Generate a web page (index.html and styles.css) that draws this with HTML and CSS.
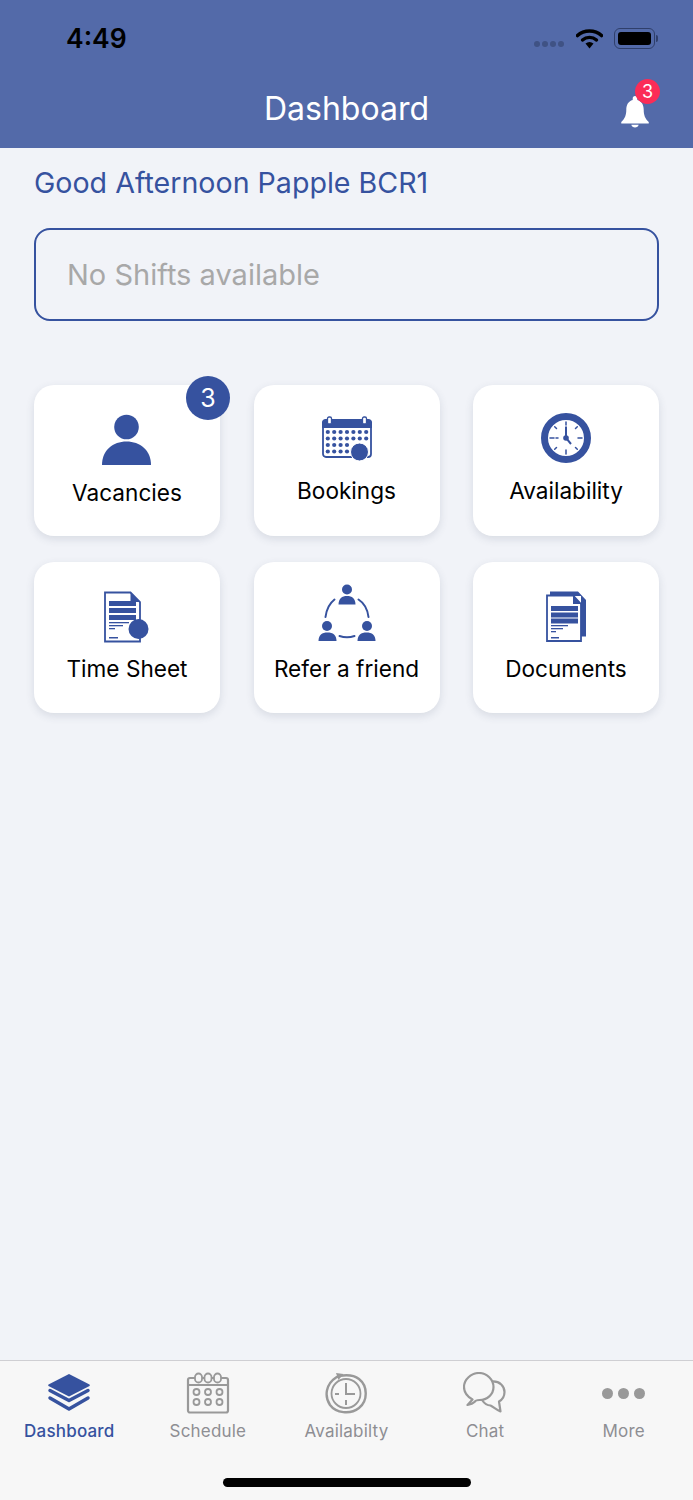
FILE: index.html
```html
<!DOCTYPE html>
<html lang="en">
<head>
    <meta charset="UTF-8">
    <meta name="viewport" content="width=device-width, initial-scale=1.0">
    <title>Dashboard</title>
    <link rel="stylesheet" href="styles.css">
</head>
<body>
<div class="app">

    <header class="top_bar">
        <div class="status_bar">
            <span class="status_time">4:49</span>
            <div class="status_icons">
                <div class="signal_dots"><i></i><i></i><i></i><i></i></div>
                <svg width="27" height="21" viewBox="0 0 27 21">
                    <path d="M1.5 7.5C8 1.5 19 1.5 25.5 7.5" fill="none" stroke="#000" stroke-width="3.6" stroke-linecap="round"/>
                    <path d="M6.5 12C10.5 8.5 16.5 8.5 20.5 12" fill="none" stroke="#000" stroke-width="3.4" stroke-linecap="round"/>
                    <path d="M9.5 15.5C12 13.5 15 13.5 17.5 15.5L13.5 20.5Z" fill="#000"/>
                </svg>
                <div class="battery"><div class="battery_fill"></div></div>
                <div class="battery_cap"></div>
            </div>
        </div>
        <div class="nav_bar">
            <h1 class="nav_title">Dashboard</h1>
            <div class="bell">
                <svg width="30" height="33" viewBox="0 0 32 36">
                    <path d="M16 1C17.600 1 18.500 2.200 18.500 3.800V5.500C23.500 7 25.500 11 25.500 16C25.500 22 27 25.500 31 29.500V31H1V29.500C5 25.500 6.500 22 6.500 16C6.500 11 8.500 7 13.500 5.500V3.800C13.500 2.200 14.400 1 16 1Z" fill="#fff"/>
                    <path d="M12 32.500H20C19.500 34.500 18 35.500 16 35.500C14 35.500 12.500 34.500 12 32.500Z" fill="#fff"/>
                </svg>
                <span class="bell_badge">3</span>
            </div>
        </div>
    </header>

    <main class="content">
        <h2 class="greeting">Good Afternoon Papple BCR1</h2>
        <div class="shift_box">No Shifts available</div>

        <div class="cards">
            <div class="card">
                <span class="card_badge">3</span>
                <svg class="icon_person" width="52" height="52" viewBox="0 0 52 52">
                    <circle cx="25.500" cy="13" r="12.300" fill="#36529f"/>
                    <path d="M1 51C1 36 12 27.500 25.500 27.500C39 27.500 50 36 50 51Z" fill="#36529f"/>
                </svg>
                <span class="card_label">Vacancies</span>
            </div>

            <div class="card card_high">
                <svg class="icon_calendar" width="52" height="46" viewBox="0 0 52 46">
                    <rect x="2" y="5" width="48" height="36" rx="3" fill="#fff" stroke="#36529f" stroke-width="1.800"/>
                    <path d="M1 12V6.500C1 4.500 2.500 3 4.500 3H47.500C49.500 3 51 4.500 51 6.500V12Z" fill="#36529f"/>
                    <rect x="6.500" y="1" width="4" height="7" rx="1.500" fill="#fff" stroke="#36529f" stroke-width="1.300"/>
                    <rect x="41.500" y="1" width="4" height="7" rx="1.500" fill="#fff" stroke="#36529f" stroke-width="1.300"/>
                    <g fill="#36529f">
                        <circle cx="6.800" cy="16" r="2.100"/><circle cx="13.200" cy="16" r="2.100"/><circle cx="19.600" cy="16" r="2.100"/><circle cx="26" cy="16" r="2.100"/><circle cx="32.400" cy="16" r="2.100"/><circle cx="38.800" cy="16" r="2.100"/><circle cx="45.200" cy="16" r="2.100"/>
                        <circle cx="6.800" cy="22.500" r="2.100"/><circle cx="13.200" cy="22.500" r="2.100"/><circle cx="19.600" cy="22.500" r="2.100"/><circle cx="26" cy="22.500" r="2.100"/><circle cx="32.400" cy="22.500" r="2.100"/><circle cx="38.800" cy="22.500" r="2.100"/><circle cx="45.200" cy="22.500" r="2.100"/>
                        <circle cx="6.800" cy="29" r="2.100"/><circle cx="13.200" cy="29" r="2.100"/><circle cx="19.600" cy="29" r="2.100"/><circle cx="26" cy="29" r="2.100"/>
                        <circle cx="6.800" cy="35.500" r="2.100"/><circle cx="13.200" cy="35.500" r="2.100"/><circle cx="19.600" cy="35.500" r="2.100"/><circle cx="26" cy="35.500" r="2.100"/>
                        <circle cx="38.500" cy="36" r="9" stroke="#fff" stroke-width="1"/>
                    </g>
                </svg>
                <span class="card_label">Bookings</span>
            </div>

            <div class="card card_high">
                <svg class="icon_clock" width="50" height="50" viewBox="0 0 50 50">
                    <circle cx="25" cy="25" r="21.500" fill="#fff" stroke="#36529f" stroke-width="7"/>
                    <g stroke="#36529f" stroke-width="1.500" stroke-linecap="round" fill="none">
                        <path d="M25 9V12M25 37V41M9 25H13M15 25H17M37 25H41M13.700 13.700L15.500 15.500M36.300 13.700L34.500 15.500M13.700 36.300L15.500 34.500M36.300 36.300L34.500 34.500"/>
                    </g>
                    <path d="M25 13.500V25L30 31" fill="none" stroke="#36529f" stroke-width="2"/>
                    <circle cx="25" cy="25" r="2.800" fill="#36529f"/>
                </svg>
                <span class="card_label">Availability</span>
            </div>

            <div class="card card_low">
                <svg class="icon_sheet" width="46" height="52" viewBox="0 0 46 52">
                    <path d="M2 1.500H27.500L37 11V50.500H2Z" fill="#fff" stroke="#36529f" stroke-width="1.800"/>
                    <path d="M27.500 1.500L37 11H27.500Z" fill="#36529f"/>
                    <g fill="#36529f">
                        <rect x="6" y="10" width="27" height="5"/>
                        <rect x="6" y="17" width="27" height="5"/>
                        <rect x="6" y="24" width="27" height="5"/>
                        <rect x="6" y="31" width="20" height="1.300"/>
                        <rect x="6" y="34" width="14" height="1.300"/>
                        <rect x="6" y="37" width="6" height="1.300"/>
                        <rect x="6" y="46" width="9" height="1.500"/>
                    </g>
                    <circle cx="35.500" cy="38" r="10" fill="#36529f"/>
                </svg>
                <span class="card_label">Time Sheet</span>
            </div>

            <div class="card card_low">
                <svg class="icon_group" width="58" height="58" viewBox="0 0 58 58">
                    <g fill="#36529f">
                        <circle cx="29" cy="5.500" r="5"/>
                        <path d="M20.500 20.500C20.500 14.500 24 12 29 12C34 12 37.500 14.500 37.500 20.500Z"/>
                        <circle cx="9" cy="42" r="5"/>
                        <path d="M0.500 57C0.500 51 4 48.500 9.500 48.500C15 48.500 18.500 51 18.500 57Z"/>
                        <circle cx="49" cy="42" r="5"/>
                        <path d="M39.500 57C39.500 51 43 48.500 48.500 48.500C54 48.500 57.500 51 57.500 57Z"/>
                    </g>
                    <g fill="none" stroke="#36529f" stroke-width="2" stroke-linecap="round">
                        <path d="M7.500 33C8.500 25 12 19 16.500 15.500"/>
                        <path d="M50.500 33C49.500 25 46 19 40.500 15.500"/>
                        <path d="M21.500 52C26 53.500 32 53.500 36.500 52"/>
                    </g>
                </svg>
                <span class="card_label">Refer a friend</span>
            </div>

            <div class="card card_low">
                <svg class="icon_docs" width="40" height="52" viewBox="0 0 40 52">
                    <path d="M4 0.500H32L40 9V45.500H35V5H4Z" fill="#36529f"/>
                    <path d="M1 4.500H27L35 13V50H1Z" fill="#fff" stroke="#36529f" stroke-width="1.800"/>
                    <path d="M27 4.500L35 13H27Z" fill="#36529f"/>
                    <g fill="#36529f">
                        <rect x="5" y="15" width="27" height="5"/>
                        <rect x="5" y="21.500" width="27" height="5"/>
                        <rect x="5" y="27.500" width="27" height="5"/>
                        <rect x="5" y="34" width="17" height="1.300"/>
                        <rect x="5" y="37" width="12" height="1.300"/>
                        <rect x="5" y="40" width="5" height="1.300"/>
                        <rect x="5" y="46" width="8" height="1.500"/>
                    </g>
                </svg>
                <span class="card_label">Documents</span>
            </div>
        </div>
    </main>

    <nav class="tab_bar">
        <div class="tabs">
            <div class="tab tab_active">
                <svg width="44" height="42" viewBox="0 -1 44 42">
                    <path d="M22 1L42.500 11.500C43 12 43 12.500 42.500 13L22 23.500L1.500 13C1 12.500 1 12 1.500 11.500Z" fill="#36529f"/>
                    <path d="M3 17.500L22 27.500L41 17.500" fill="none" stroke="#36529f" stroke-width="3.500" stroke-linecap="round" stroke-linejoin="round"/>
                    <path d="M3 25L22 36L41 25" fill="none" stroke="#36529f" stroke-width="3.500" stroke-linecap="round" stroke-linejoin="round"/>
                </svg>
                <span class="tab_label">Dashboard</span>
            </div>
            <div class="tab">
                <svg width="44" height="42" viewBox="0 0 44 42">
                    <rect x="2" y="6" width="40" height="34.500" rx="2" fill="none" stroke="#999" stroke-width="2.200"/>
                    <path d="M2 13H42" stroke="#999" stroke-width="2"/>
                    <g fill="#f7f7f7" stroke="#999" stroke-width="1.800">
                        <rect x="9" y="1.500" width="7" height="9" rx="3.500"/>
                        <rect x="18.500" y="1.500" width="7" height="9" rx="3.500"/>
                        <rect x="28" y="1.500" width="7" height="9" rx="3.500"/>
                        <circle cx="10.500" cy="20" r="3"/><circle cx="22" cy="20" r="3"/><circle cx="33.500" cy="20" r="3"/>
                        <circle cx="10.500" cy="30" r="3"/><circle cx="22" cy="30" r="3"/><circle cx="33.500" cy="30" r="3"/>
                    </g>
                </svg>
                <span class="tab_label">Schedule</span>
            </div>
            <div class="tab">
                <svg width="44" height="42" viewBox="0 0 44 42">
                    <path d="M12 5.500C16 3 28 1.500 35 7C44 14 44 29 35 36C26 43 12 41 6 33C0 24 2 12 12 5.500" fill="none" stroke="#999" stroke-width="2.400"/>
                    <path d="M12 1L19.500 2L14.500 8Z" fill="#999"/>
                    <circle cx="22" cy="21.500" r="14.500" fill="none" stroke="#999" stroke-width="1.800"/>
                    <path d="M22 11V22H31M22 28V33M11 22H15" fill="none" stroke="#999" stroke-width="2"/>
                </svg>
                <span class="tab_label">Availabilty</span>
            </div>
            <div class="tab">
                <svg width="44" height="42" viewBox="0 0 44 42">
                    <path d="M4.500 33L9.500 27.500C4 24.500 1 20 1 15C1 7.500 8 1 16 1C24 1 30.500 7.500 30.500 15C30.500 22.500 24 28 16.500 28C14.500 28 12.500 28 11.500 30C9.500 32 7 32.500 4.500 33Z" fill="none" stroke="#999" stroke-width="2.200" stroke-linejoin="round"/>
                    <path d="M29 9.500C37 9 41.500 14.500 41.500 20C41.500 24.500 39.500 27.500 36 29.500L37.500 39.500C34 38 30.500 35 27.500 33.500C24 33.500 21 31 19 28" fill="none" stroke="#999" stroke-width="2.200" stroke-linejoin="round"/>
                </svg>
                <span class="tab_label">Chat</span>
            </div>
            <div class="tab">
                <div class="more_dots"><i></i><i></i><i></i></div>
                <span class="tab_label">More</span>
            </div>
        </div>
        <div class="home_bar"></div>
    </nav>

</div>
</body>
</html>
```

FILE: styles.css
```css
* {
    box-sizing: border-box;
}

body {
    margin: 0;
    font-family: "Inter", "Liberation Sans", sans-serif;
}

.app {
    width: 693px;
    height: 1500px;
    display: flex;
    flex-direction: column;
    background-color: #f1f3f8;
}

/* top bar */
.top_bar {
    height: 148px;
    background-color: #536aa9;
    padding-top: 20px;
}

.status_bar {
    display: flex;
    justify-content: space-between;
    align-items: center;
    height: 36px;
    padding: 0 35px 0 66px;
}

.status_time {
    font-size: 26.500px;
    font-weight: 600;
    color: #000;
}

.status_icons {
    display: flex;
    align-items: center;
}

.signal_dots {
    display: flex;
    gap: 2px;
    margin: 12px 12px 0 0;
}

.signal_dots i {
    width: 6px;
    height: 6px;
    border-radius: 50%;
    background-color: #3f5284;
}

.battery {
    width: 41px;
    height: 21px;
    margin-left: 11px;
    padding: 3px;
    border: 1.500px solid #2f3f6b;
    border-radius: 6px;
}

.battery_fill {
    height: 100%;
    border-radius: 3px;
    background-color: #000;
}

.battery_cap {
    width: 2px;
    height: 7px;
    margin-left: 1px;
    border-radius: 0 2px 2px 0;
    background-color: #2f3f6b;
}

.nav_bar {
    position: relative;
    display: flex;
    justify-content: center;
    align-items: center;
    height: 56px;
    margin-top: 24px;
}

.nav_title {
    margin: 0;
    font-size: 32px;
    font-weight: 400;
    color: #fff;
}

.bell {
    position: absolute;
    left: 620px;
    top: 15px;
}

.bell_badge {
    position: absolute;
    left: 15px;
    top: -16px;
    width: 25px;
    height: 25px;
    border-radius: 50%;
    background-color: #fb2c57;
    color: #fff;
    font-size: 18px;
    line-height: 25px;
    text-align: center;
}

/* main content */
.content {
    flex: 1;
    padding: 0 34px;
}

.greeting {
    margin: 15px 0 0;
    font-size: 28.600px;
    line-height: 40px;
    font-weight: 400;
    color: #36529f;
}

.shift_box {
    height: 93px;
    margin-top: 25px;
    padding-left: 31px;
    border: 2px solid #36529f;
    border-radius: 16px;
    font-size: 29px;
    line-height: 89px;
    color: #a8a8a8;
}

.cards {
    display: grid;
    grid-template-columns: repeat(3, 186px);
    grid-auto-rows: 151px;
    justify-content: space-between;
    row-gap: 26px;
    margin-top: 64px;
}

.card {
    position: relative;
    display: flex;
    flex-direction: column;
    align-items: center;
    justify-content: flex-end;
    padding-bottom: 28px;
    border-radius: 20px;
    background-color: #fff;
    box-shadow: 0 3px 8px rgba(60, 70, 100, 0.14);
}

.card_high {
    padding-bottom: 30px;
}

.card_low {
    padding-bottom: 29px;
}

.icon_person {
    margin-bottom: 12px;
}

.icon_calendar {
    margin-bottom: 14px;
}

.icon_clock {
    margin-bottom: 13px;
}

.icon_sheet {
    margin: 0 0 11px -2px;
}

.icon_group {
    margin-bottom: 12px;
}

.icon_docs {
    margin-bottom: 11px;
}

.card_label {
    font-size: 22.600px;
    line-height: 30px;
    color: #000;
}

.card_badge {
    position: absolute;
    right: -10px;
    top: -9px;
    width: 44px;
    height: 44px;
    border-radius: 50%;
    background-color: #36529f;
    color: #fff;
    font-size: 25px;
    line-height: 44px;
    text-align: center;
}

/* bottom tabs */
.tab_bar {
    height: 140px;
    border-top: 1px solid #cfcfd3;
    background-color: #f7f7f7;
}

.tabs {
    display: flex;
    padding-top: 11px;
}

.tab {
    width: 138.600px;
    display: flex;
    flex-direction: column;
    align-items: center;
}

.tab_label {
    margin-top: 5px;
    font-size: 17px;
    line-height: 24px;
    letter-spacing: 0.2px;
    color: #8e8e93;
}

.tab_active .tab_label {
    color: #36529f;
    font-weight: 500;
}

.more_dots {
    display: flex;
    align-items: center;
    gap: 5px;
    height: 42px;
}

.more_dots i {
    width: 11px;
    height: 11px;
    border-radius: 50%;
    background-color: #999;
}

.home_bar {
    width: 248px;
    height: 9px;
    margin: 35px auto 0;
    border-radius: 5px;
    background-color: #000;
}
```
